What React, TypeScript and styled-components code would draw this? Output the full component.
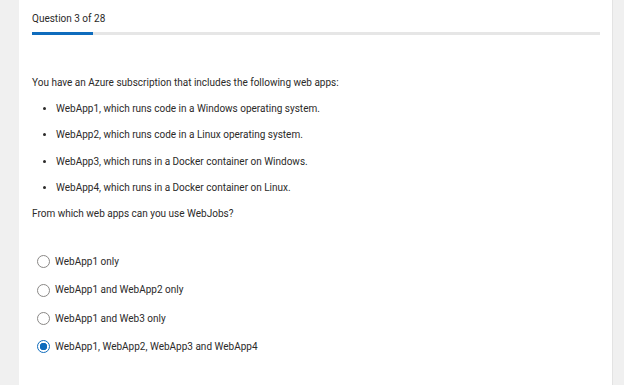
import { FC } from "react";
import styled, { createGlobalStyle } from "styled-components";

const GlobalStyle = createGlobalStyle`
  html, body {
    margin: 0;
    padding: 0;
    background: #f0f0f0;
  }
  body {
    font-family: Roboto, "Liberation Sans", sans-serif;
    color: #2b2a29;
  }
`;

const facts = [
  "WebApp1, which runs code in a Windows operating system.",
  "WebApp2, which runs code in a Linux operating system.",
  "WebApp3, which runs in a Docker container on Windows.",
  "WebApp4, which runs in a Docker container on Linux.",
];

const choices = [
  "WebApp1 only",
  "WebApp1 and WebApp2 only",
  "WebApp1 and Web3 only",
  "WebApp1, WebApp2, WebApp3 and WebApp4",
];

const current = 3;
const total = 28;
const selected = 3;

const App: FC = () => {
  return (
    <Page>
      <GlobalStyle />
      <Card>
        <Header>
          <Counter>
            Question {current} of {total}
          </Counter>
          <Track>
            <Fill style={{ width: `${(current / total) * 100}%` }} />
          </Track>
        </Header>
        <Body>
          <Text>You have an Azure subscription that includes the following web apps:</Text>
          <FactList>
            {facts.map((f) => (
              <Fact key={f}>{f}</Fact>
            ))}
          </FactList>
          <Text>From which web apps can you use WebJobs?</Text>
        </Body>
        <Choices>
          {choices.map((c, i) => (
            <Choice key={c}>
              <Radio $checked={i === selected} />
              <span>{c}</span>
            </Choice>
          ))}
        </Choices>
      </Card>
    </Page>
  );
};

export default App;

const Page = styled.div`
  display: flex;
  height: 385px;
  padding-left: 19px;
  overflow: hidden;
`;

const Card = styled.div`
  width: 594px;
  background: #fff;
  border-right: 1px solid #e3e3e3;
  padding: 0 13px;
  box-sizing: border-box;
`;

const Header = styled.div`
  padding-top: 12px;
`;

const Counter = styled.div`
  font-size: 10px;
  line-height: 14px;
`;

const Track = styled.div`
  margin-top: 6px;
  height: 3px;
  background: #e6e6e6;
  width: 568px;
`;

const Fill = styled.div`
  height: 100%;
  background: #0f6cbd;
`;

const Body = styled.div`
  padding-top: 41px;
`;

const Text = styled.p`
  margin: 0;
  font-size: 10px;
  line-height: 14px;
`;

const FactList = styled.ul`
  margin: 12px 0 12px;
  padding-left: 24px;
  display: flex;
  flex-direction: column;
  gap: 12.33px;
`;

const Fact = styled.li`
  font-size: 10px;
  line-height: 14px;
`;

const Choices = styled.div`
  margin-top: 34px;
  display: flex;
  flex-direction: column;
  gap: 14.33px;
`;

const Choice = styled.label`
  display: flex;
  align-items: center;
  gap: 5px;
  padding-left: 5px;
  font-size: 10px;
  line-height: 14px;
`;

const Radio = styled.span<{ $checked: boolean }>`
  width: 13px;
  height: 13px;
  border-radius: 50%;
  box-sizing: border-box;
  border: 1px solid ${(p) => (p.$checked ? "#0f6cbd" : "#8a8886")};
  background: ${(p) =>
    p.$checked ? "radial-gradient(circle, #0f6cbd 0 3.5px, #fff 4px)" : "#fff"};
  flex-shrink: 0;
`;
